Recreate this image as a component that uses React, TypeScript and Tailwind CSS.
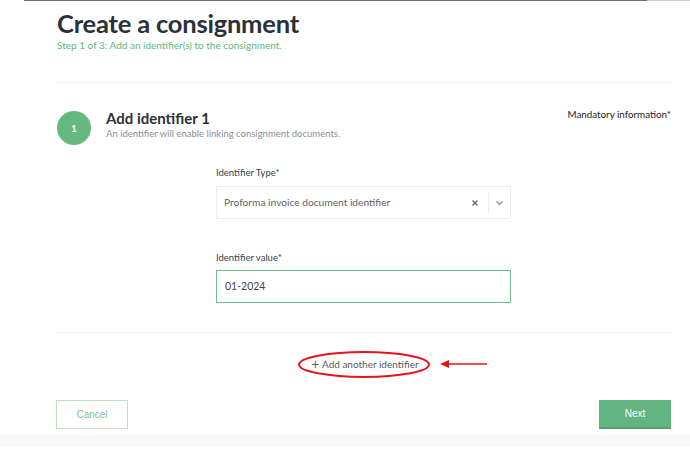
import React from 'react';

const App: React.FC = () => {
  return (
    <div className="relative w-[690px] h-[461px] bg-white overflow-hidden font-['Lato',sans-serif]">
      {/* top rule */}
      <div className="flex h-px">
        <div className="w-[24px]" />
        <div className="w-[623px] bg-[#6e6e6e]" />
        <div className="flex-1 bg-[#cdcdcd]" />
      </div>

      <div className="pl-[57px] pr-[19px]">
        <h1 className="mt-[6px] text-[25.5px] leading-[32px] font-bold text-[#2b3139] tracking-[-0.2px]">Create a consignment</h1>
        <p className="mt-[0px] text-[10px] leading-[12px] text-[#5cb87a]">Step 1 of 3: Add an identifier(s) to the consignment.</p>

        <div className="mt-[31px] h-px bg-[#f1f1f1]" />

        <div className="mt-[28px] flex items-start">
          <div className="flex-none w-[34px] h-[34px] rounded-full bg-[#64b880] flex items-center justify-center text-white text-[10px] font-bold">1</div>
          <div className="ml-[15px] flex-1">
            <h2 className="text-[15px] leading-[18px] font-bold text-[#2b3139] mt-[-2px]">Add identifier 1</h2>
            <p className="mt-[1px] text-[9.5px] leading-[11px] text-[#8a8f94]">An identifier will enable linking consignment documents.</p>
          </div>
          <div className="mt-[-3px] text-[9.8px] leading-[12px] text-[#222]">Mandatory information*</div>
        </div>

        <div className="ml-[159px] w-[295px] mt-[22px]">
          <label className="block text-[9.5px] leading-[12px] text-[#3a3f44]">Identifier Type*</label>
          <div className="mt-[7px] h-[33px] border border-[#ececec] flex items-center">
            <span className="flex-1 pl-[7px] text-[10.2px] text-[#5f6368]">Proforma invoice document identifier</span>
            <span className="w-[20px] flex justify-center text-[#666]">
              <svg width="8" height="8" viewBox="0 0 8 8"><path d="M1.5 1.5 L6.5 6.5 M6.5 1.5 L1.5 6.5" stroke="#666" strokeWidth="1.4" /></svg>
            </span>
            <span className="w-px h-[20px] bg-[#ececec] ml-[3px]" />
            <span className="w-[21px] flex justify-center">
              <svg width="9" height="6" viewBox="0 0 9 6"><path d="M1.5 1.5 L4.5 4.5 L7.5 1.5" stroke="#888" strokeWidth="1.2" fill="none" /></svg>
            </span>
          </div>

          <label className="block mt-[33px] text-[9.5px] leading-[12px] text-[#3a3f44]">Identifier value*</label>
          <div className="mt-[6px] h-[33px] border-[1.5px] border-[#6fbf86] flex items-center pl-[8px] text-[10.5px] text-[#444]">01-2024</div>
        </div>

        <div className="mt-[29px] h-px bg-[#f1f1f1]" />

        <div className="relative mt-[18px] h-[27px] flex items-center justify-center">
          <div className="relative flex items-center justify-center w-[132px] h-[27px]">
            <svg className="absolute inset-0" width="132" height="27" viewBox="0 0 132 27">
              <ellipse cx="66" cy="13.5" rx="65" ry="12.5" fill="none" stroke="#e8141c" strokeWidth="2" />
            </svg>
            <span className="text-[10px] text-[#5a5a5a] flex items-center gap-[3px] ml-[2px]">
              <span className="text-[13px] leading-none">+</span>Add another identifier
            </span>
          </div>
          <svg className="absolute left-[382px] top-[7px]" width="50" height="12" viewBox="0 0 50 12">
            <path d="M48 6 L8 6" stroke="#e8141c" strokeWidth="1.6" />
            <path d="M1 6 L10 2 L10 10 Z" fill="#e8141c" />
          </svg>
        </div>

        <div className="mt-[22px] flex justify-between">
          <button className="ml-[-1px] w-[72px] h-[29px] border border-[#b8e2c6] text-[#78c48f] text-[10px] font-['Liberation_Sans',sans-serif]">Cancel</button>
          <button className="w-[72px] h-[29px] bg-[#62b57f] border-b-2 border-[#4f9f6b] text-white text-[10px] font-['Liberation_Sans',sans-serif]">Next</button>
        </div>
      </div>

      <div className="mt-[5px] h-[13px] bg-[#f9f9f9]" />
    </div>
  );
};

export default App;
